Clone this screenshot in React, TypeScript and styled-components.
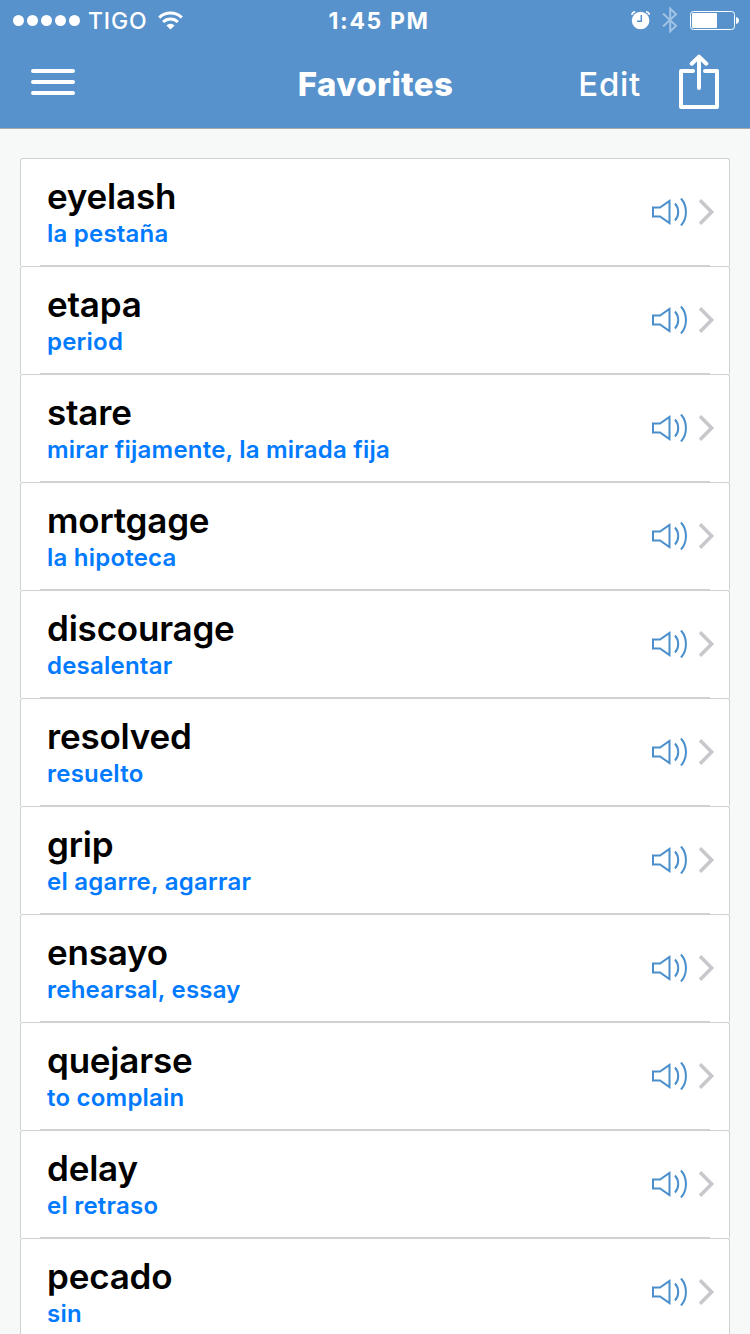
import React from "react";
import styled, { createGlobalStyle } from "styled-components";

const GlobalStyle = createGlobalStyle`
  * { box-sizing: border-box; }
  html, body { margin: 0; padding: 0; background: #f7f9f8; }
  body { font-family: Inter, "Liberation Sans", sans-serif; overflow: hidden; }
`;

const Screen = styled.div`
  width: 750px;
  height: 1334px;
  overflow: hidden;
  background: #f7f9f8;
`;

const Header = styled.header`
  height: 129px;
  background: #5792cc;
  border-bottom: 1px solid #a9aaab;
  color: #fff;
`;

const StatusBar = styled.div`
  height: 40px;
  display: grid;
  grid-template-columns: 1fr auto 1fr;
  align-items: center;
  padding: 0 11px 0 13px;
`;

const StatusGroup = styled.div`
  display: flex;
  align-items: center;
  height: 40px;
`;

const StatusIcons = styled.div`
  display: flex;
  align-items: center;
  justify-content: flex-end;
  gap: 12px;
  height: 40px;
`;

const SignalDots = styled.div`
  display: flex;
  gap: 3px;
  padding-top: 1px;
`;

const Dot = styled.span`
  width: 11px;
  height: 11px;
  border-radius: 50%;
  background: #fff;
`;

const Carrier = styled.span`
  margin: 1px 11px 0 8px;
  font-size: 23px;
  line-height: 28px;
  font-weight: 500;
  letter-spacing: 0.8px;
`;

const Clock = styled.span`
  margin: 1px 0 0 6px;
  font-size: 23px;
  line-height: 28px;
  font-weight: 700;
  letter-spacing: 1.6px;
`;

const NavBar = styled.nav`
  height: 88px;
  display: grid;
  grid-template-columns: 1fr auto 1fr;
  align-items: center;
  padding: 0 30px 0 31px;
`;

const MenuButton = styled.div`
  display: flex;
  flex-direction: column;
  gap: 7px;
  width: 44px;
  padding-bottom: 4px;
`;

const MenuBar = styled.span`
  height: 4px;
  border-radius: 2px;
  background: #fff;
`;

const Title = styled.h1`
  margin: 0;
  font-size: 33px;
  line-height: 40px;
  font-weight: 800;
  letter-spacing: 0.35px;
`;

const NavActions = styled.div`
  display: flex;
  justify-content: flex-end;
  align-items: center;
`;

const EditLabel = styled.span`
  font-size: 33px;
  line-height: 40px;
  font-weight: 550;
  letter-spacing: 0.7px;
  margin-right: 37px;
`;

const List = styled.ul`
  list-style: none;
  margin: 0;
  padding: 29px 20px 0;
`;

const Row = styled.li`
  height: 108px;
  display: flex;
  flex-direction: column;
  border: 1px solid #d0d1d2;
  border-bottom: 0;
  border-radius: 3px 3px 0 0;
  background: #fff;
`;

const RowBody = styled.div`
  flex: 1;
  display: flex;
  justify-content: space-between;
  padding: 17px 14px 0 26px;
`;

const Divider = styled.div`
  height: 1px;
  margin: 0 19px;
  background: #cfcfd1;
`;

const Word = styled.div`
  font-size: 35px;
  line-height: 40px;
  font-weight: 570;
  letter-spacing: -0.2px;
  color: #000;
`;

const Translation = styled.div`
  margin-top: 3px;
  font-size: 24px;
  line-height: 30px;
  font-weight: 570;
  letter-spacing: 0.22px;
  color: #007aff;
`;

const RowIcons = styled.div`
  display: flex;
  align-items: center;
  gap: 11px;
  height: 72px;
`;

const entries = [
  { word: "eyelash", translation: "la pestaña" },
  { word: "etapa", translation: "period" },
  { word: "stare", translation: "mirar fijamente, la mirada fija" },
  { word: "mortgage", translation: "la hipoteca" },
  { word: "discourage", translation: "desalentar" },
  { word: "resolved", translation: "resuelto" },
  { word: "grip", translation: "el agarre, agarrar" },
  { word: "ensayo", translation: "rehearsal, essay" },
  { word: "quejarse", translation: "to complain" },
  { word: "delay", translation: "el retraso" },
  { word: "pecado", translation: "sin" },
];

const WifiIcon = () => (
  <svg width="25" height="19" viewBox="0 0 25 19" fill="none" stroke="#fff" strokeWidth="3">
    <path d="M1.2 6.6a16.4 16.4 0 0 1 22.6 0" />
    <path d="M5.1 11a10.6 10.6 0 0 1 14.8 0" />
    <path d="M12.5 18.6l-4.1-4.2a6 6 0 0 1 8.2 0z" fill="#fff" stroke="none" />
  </svg>
);

const AlarmIcon = () => (
  <svg width="20" height="20" viewBox="0 0 20 20" fill="none">
    <circle cx="10.6" cy="10.5" r="8.8" fill="#fff" />
    <path d="M1.700 4.800A4 4 0 0 1 5.200 1.700M16 1.700A4 4 0 0 1 19.500 4.800" stroke="#fff" strokeWidth="1.500" />
    <path d="M11.300 5v6.300H7" stroke="#5792cc" strokeWidth="1.5" />
  </svg>
);

const BluetoothIcon = () => (
  <svg width="16" height="28" viewBox="0 0 16 28" fill="none" stroke="#a0c2e4" strokeWidth="2">
    <path d="M1 7.5l13 12.3-5.8 5.5V2.7L14 8.2 1 20.5" />
  </svg>
);

const BatteryIcon = () => (
  <svg width="49" height="19" viewBox="0 0 49 19" fill="none">
    <rect x="0.5" y="0.5" width="44" height="18" rx="3" stroke="#fff" />
    <rect x="2" y="2" width="25" height="15" rx="1" fill="#fff" />
    <path d="M46 6c2 .4 3 1.700 3 3.500s-1 3.100-3 3.500z" fill="#fff" />
  </svg>
);

const ShareIcon = () => (
  <svg width="42" height="60" viewBox="0 0 42 60" fill="none" stroke="#fff" strokeWidth="4" strokeLinecap="round" strokeLinejoin="round">
    <path d="M15 17H3v36h36V17H27" />
    <path d="M21 34V3M13.700 9.700L21 2.600l7.300 7.100" />
  </svg>
);

const SpeakerIcon = () => (
  <svg width="37" height="30" viewBox="0 0 37 30" fill="none" stroke="#4a8fcb" strokeWidth="2">
    <path d="M2 10.500h7L18.500 4v22L9 19.500H2z" />
    <path d="M24 6.500c4.300 4.800 4.300 12.200 0 17" />
    <path d="M30 1.500c6.600 7.500 6.600 19.500 0 27" />
  </svg>
);

const ChevronIcon = () => (
  <svg width="16" height="26" viewBox="0 0 16 26" fill="none" stroke="#c7c7cc" strokeWidth="3.600">
    <path d="M1 1.300L12.600 13 1 24.700" />
  </svg>
);

export default function App() {
  return (
    <>
      <GlobalStyle />
      <Screen>
        <Header>
          <StatusBar>
            <StatusGroup>
              <SignalDots>
                {[0, 1, 2, 3, 4].map((i) => (
                  <Dot key={i} />
                ))}
              </SignalDots>
              <Carrier>TIGO</Carrier>
              <WifiIcon />
            </StatusGroup>
            <Clock>1:45 PM</Clock>
            <StatusIcons>
              <AlarmIcon />
              <BluetoothIcon />
              <BatteryIcon />
            </StatusIcons>
          </StatusBar>
          <NavBar>
            <MenuButton>
              <MenuBar />
              <MenuBar />
              <MenuBar />
            </MenuButton>
            <Title>Favorites</Title>
            <NavActions>
              <EditLabel>Edit</EditLabel>
              <ShareIcon />
            </NavActions>
          </NavBar>
        </Header>
        <List>
          {entries.map((entry) => (
            <Row key={entry.word}>
              <RowBody>
                <div>
                  <Word>{entry.word}</Word>
                  <Translation>{entry.translation}</Translation>
                </div>
                <RowIcons>
                  <SpeakerIcon />
                  <ChevronIcon />
                </RowIcons>
              </RowBody>
              <Divider />
            </Row>
          ))}
        </List>
      </Screen>
    </>
  );
}
